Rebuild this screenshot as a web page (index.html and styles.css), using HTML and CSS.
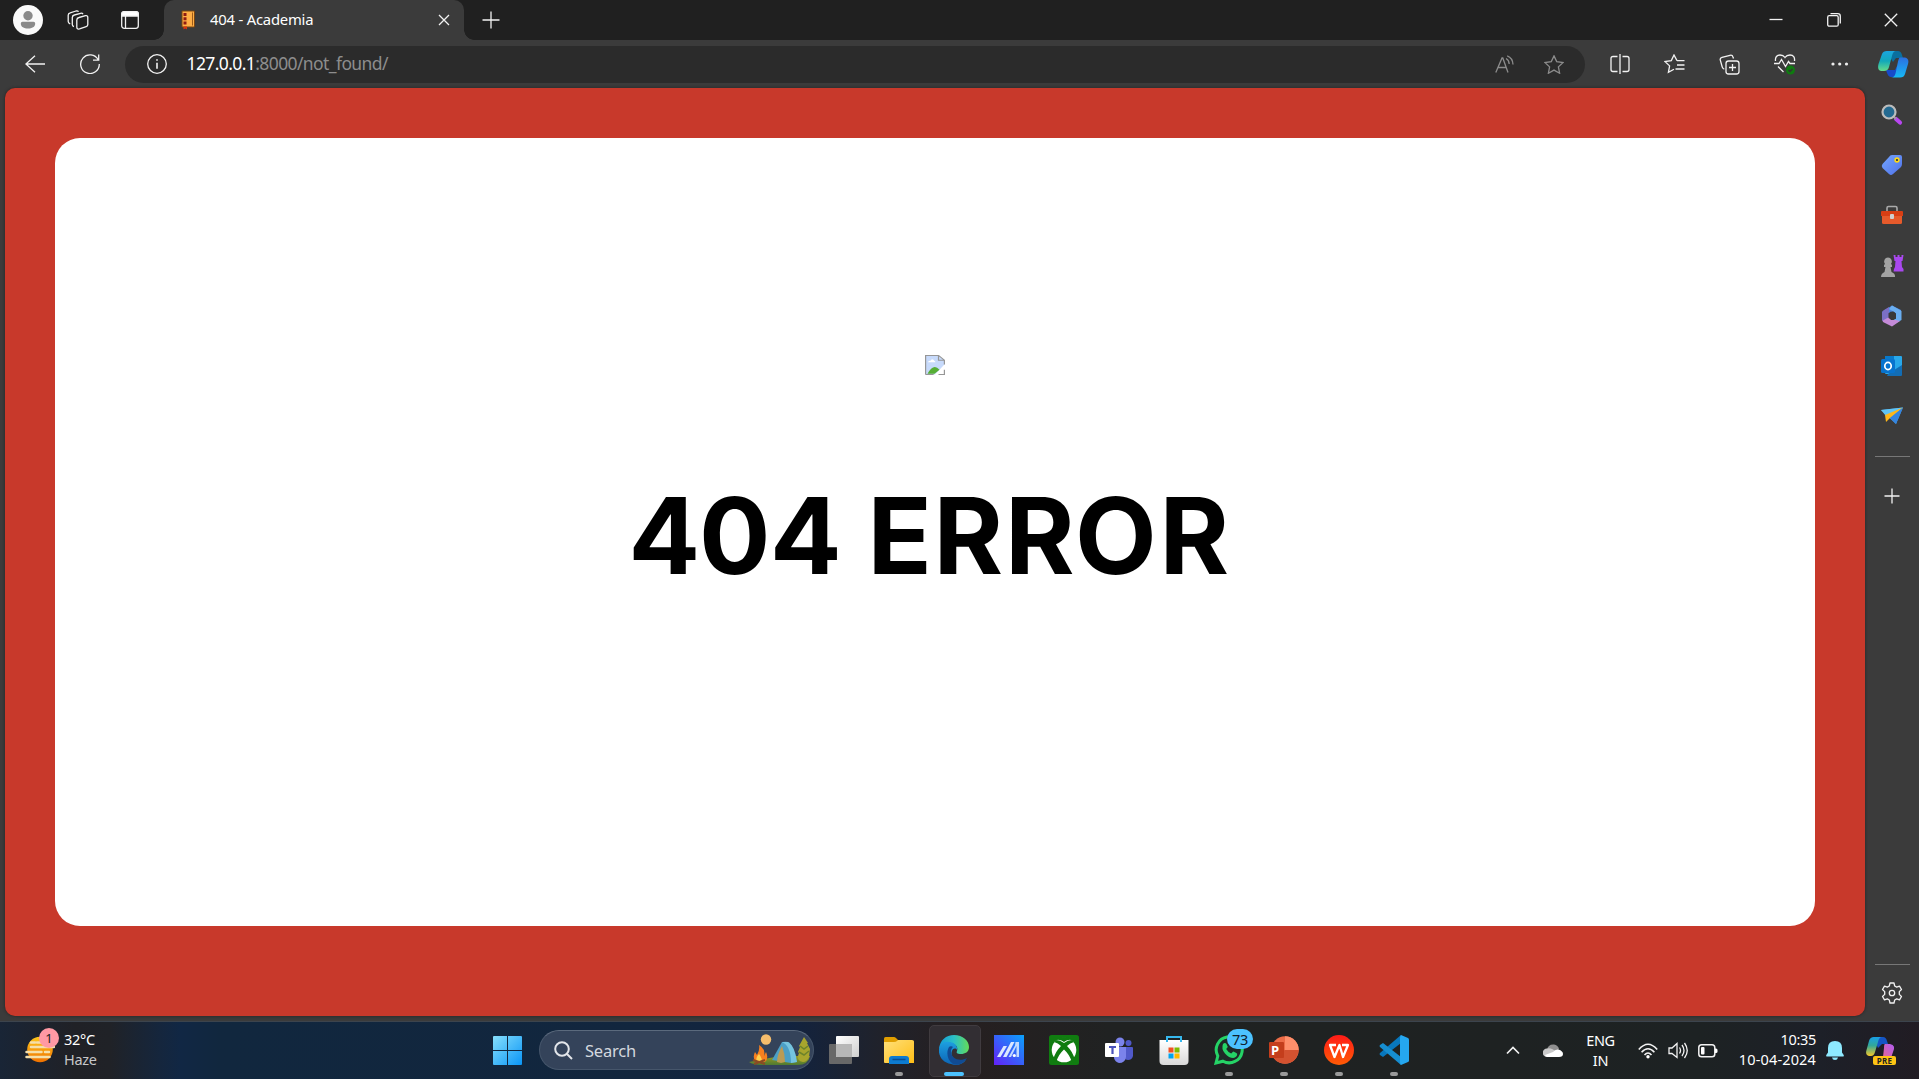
FILE: index.html
```html
<!DOCTYPE html>
<html lang="en">
<head>
<meta charset="utf-8">
<title>404 - Academia</title>
<link rel="stylesheet" href="styles.css">
</head>
<body>
<header class="titlebar">
  <div class="title-tools">
    <svg width="30" height="30" viewBox="0 0 30 30"><circle cx="15" cy="15" r="15" fill="#fafafa"/><circle cx="15" cy="10.700" r="4.700" fill="#8a8a8a"/><path d="M9.500 16.800h11a1.700 1.700 0 0 1 1.700 1.700c0 3.600-3.200 5-7.200 5s-7.200-1.400-7.200-5a1.700 1.700 0 0 1 1.700-1.700z" fill="#8a8a8a"/></svg>
    <svg class="line" width="22" height="22" viewBox="0 0 22 22"><path d="M12 8.500l6.500-1.800q2.300-.5 2.300 1.800v7q0 1.700-1.600 2.200l-6.700 2.200q-2.700.7-2.700-2V11q0-2 2.200-2.500z"/><path d="M7 17.500q-1.700-.3-1.700-2V8.500q0-2 2-2.500l6.200-1.700q1.800-.4 2.500.8M3.200 14.800Q1.200 14 1.200 12.500V6.300q0-2 2-2.500L9 2q1.800-.5 2.500.8"/></svg>
    <svg class="line" width="18" height="18" viewBox="0 0 18 18"><rect x=".7" y=".7" width="16.600" height="16.600" rx="2.500"/><path d="M.7 5V3.200Q.7.700 3.200.700h11.600q2.500 0 2.500 2.500V5z" fill="#fff"/><path d="M4.500 5v12"/></svg>
  </div>
  <div class="tab">
    <svg width="15" height="20" viewBox="0 0 15 20"><path d="M1 1h12.500v16H1z" fill="#ffae45" stroke="#7a4612"/><path d="M11.500 2.500v13" stroke="#9c5b19"/><path d="M2.500 3h3v3h-3zm0 4.200h3v3h-3zm0 4.200h3v3h-3z" fill="#8e1b12"/><path d="M2.500 16.500h3.500v3l-1.700-1-1.800 1z" fill="#d8340f"/></svg>
    <span class="tab-title">404 - Academia</span>
    <svg class="line" width="12" height="12" viewBox="0 0 12 12"><path d="M1 1l10 10M11 1L1 11"/></svg>
  </div>
  <svg class="line new-tab" width="18" height="18" viewBox="0 0 18 18"><path d="M9 .5v17M.5 9h17"/></svg>
  <div class="window-buttons">
    <span><svg class="line" width="14" height="14" viewBox="0 0 14 14"><path d="M.5 6.500h13"/></svg></span>
    <span><svg class="line" width="14" height="14" viewBox="0 0 14 14"><rect x=".7" y="2.700" width="10.500" height="10.500" rx="1.500"/><path d="M3.500.7h7.300q2.500 0 2.500 2.500v7.300"/></svg></span>
    <span><svg class="line" width="14" height="14" viewBox="0 0 14 14"><path d="M.8.8l12.400 12.400M13.200.8L.8 13.200"/></svg></span>
  </div>
</header>

<nav class="toolbar">
  <div class="nav-buttons">
    <svg class="line" width="20" height="18" viewBox="0 0 20 18"><path d="M10 .7L.9 9l9.100 8.300M1 9h19"/></svg>
    <svg class="line" width="20" height="20" viewBox="0 0 20 20"><path d="M18.200 5.800A9.300 9.300 0 1 0 19.300 10M18.700.5v5.700H13"/></svg>
  </div>
  <div class="address">
    <svg class="line" width="20" height="20" viewBox="0 0 20 20"><circle cx="10" cy="10" r="9.300"/><path d="M10 8.800v6M10 5.200v1.600" stroke-width="1.600"/></svg>
    <span class="url"><b>127.0.0.1</b>:8000/not_found/</span>
    <svg class="line dim" width="20" height="18" viewBox="0 0 20 18"><path d="M.8 17.500L7 3h.8L13 17.500M2.900 12.500h8.500M11 3.500q3 1.500 3.200 5.500M12.200.8q5.500 2 5.800 8.700"/></svg>
    <svg class="line dim" width="20" height="19" viewBox="0 0 20 19"><path d="M10 .9l2.700 5.700 6.400.9-4.700 4.400 1.200 6.300-5.600-3.100-5.600 3.100 1.200-6.300L.9 7.500l6.400-.9z"/></svg>
  </div>
  <div class="toolbar-actions">
    <span><svg class="line" width="20" height="20" viewBox="0 0 20 20"><path d="M7.500 2.500H3Q1 2.500 1 4.500v11q0 2 2 2h4.500M12.500 2.500H17q2 0 2 2v11q0 2-2 2h-4.500"/><path d="M10 0v20"/></svg></span>
    <span><svg class="line" width="21" height="20" viewBox="0 0 21 20"><path d="M13 6.600L10 1 7.300 6.600.9 7.500l4.700 4.400-1.200 6.400 5.600-3.100M13 6.600h7.500M13 11h7.500M11.500 15h9"/></svg></span>
    <span><svg class="line" width="21" height="21" viewBox="0 0 21 21"><rect x="7" y="7" width="13" height="13" rx="2.500"/><path d="M13.500 10v7M10 13.500h7M14.500 4.500L14 3q-.7-2.300-3-1.700L3 3.300Q.7 4 1.300 6.200l2 7q.4 1.600 2 2"/></svg></span>
    <span><svg class="line" width="22" height="22" viewBox="0 0 22 22"><path d="M1.500 8C1 4 3 2 6 2c2.500 0 4 1 5 2.500C12 3 14 2 16 2c3.500 0 5 2.500 4.500 6M0 10.500h5l2.500-4 4 7 3-5 1.500 2h5M4 13.500l5.500 5.500"/><circle cx="16.500" cy="17" r="4.500" fill="#0f7b10" stroke="none"/><path d="M14.500 17l1.500 1.500 2.500-2.500" stroke="#333"/></svg></span>
    <span><svg width="18" height="4" viewBox="0 0 18 4" fill="#eee"><circle cx="2" cy="2" r="1.600"/><circle cx="8.700" cy="2" r="1.600"/><circle cx="15.500" cy="2" r="1.600"/></svg></span>
    <span><svg width="31" height="28" viewBox="0 0 31 28"><defs><linearGradient id="ca" x1="0" y1="0" x2="0" y2="1"><stop offset="0" stop-color="#1ba5df"/><stop offset=".5" stop-color="#12a8ba"/><stop offset="1" stop-color="#66dc8a"/></linearGradient><linearGradient id="cb" x1="0" y1="0" x2="0" y2="1"><stop offset="0" stop-color="#2c6fe0"/><stop offset="1" stop-color="#16b9f5"/></linearGradient></defs><path d="M8 1h12q3 0 4 4l1 3h-7l-3 4z" fill="#0a6f9f"/><path d="M8 20h9l2-4 2 11h-8q-2.500 0-4-4z" fill="#174bc9"/><path d="M9 1h9q-3 0-4 5l-3 11q-1 4-5 4H3q-4-1-2.500-7L4 4q1-3 5-3z" fill="url(#ca)"/><path d="M22 7.500h5q4.500 1 3 6.500l-3 10q-1 3.500-5 3.500h-9q3.500 0 4.500-4l2.500-12q1-4 2-4z" fill="url(#cb)"/></svg></span>
  </div>
</nav>

<div class="workspace">
  <main class="page">
    <section class="card">
      <svg width="20" height="20" viewBox="0 0 20 25" preserveAspectRatio="none"><path d="M.6.600h13l5.800 5.800V12L10 24.400H.6z" fill="#c7dafb"/><path d="M2.500 23.500q6-14 12-5l-5 5z" fill="#56ae35"/><path d="M3 9q.5-2 2.500-1.800Q6.500 4 8.500 6q1 2 1.500 1.800.5.600.3 1.200z" fill="#fff"/><path d="M.6 24.500V.600h13l5.800 5.800V12M.6 24.300h8M13.500 24.300h5.900V18.500M13.500.600v5.900h6" fill="none" stroke="#969696" stroke-width="1.200"/></svg>
      <h1><svg width="640" height="160" viewBox="0 0 640 160"><text y="119.300" x="13.500 84 155 225 252.500 318.500 390 460 544.500">404 ERROR</text></svg></h1>
    </section>
  </main>
  <aside class="sidebar">
    <div class="side-apps">
      <span><svg width="22" height="22" viewBox="0 0 22 22"><path d="M15 15l4 3.500" stroke="#b846f0" stroke-width="4.200" stroke-linecap="round"/><path d="M12 12l3 3" stroke="#999" stroke-width="2"/><circle cx="8" cy="8" r="6.500" fill="#246a91" stroke="#bcbcbc" stroke-width="2.200"/></svg></span>
      <span><svg width="22" height="22" viewBox="0 0 22 22"><defs><linearGradient id="tg" x2="1" y2="1"><stop stop-color="#74a7ff"/><stop offset="1" stop-color="#4f70e8"/></linearGradient></defs><path d="M11 1h8q2 0 2 2v7q0 2-1.500 3.500L12 20q-2 2-4 0l-6.500-6q-1.500-2 0-4L8 3q1-2 3-2z" fill="url(#tg)"/><circle cx="16" cy="6" r="1.900" fill="#234" stroke="#fed716" stroke-width="1.600"/></svg></span>
      <span><svg width="24" height="20" viewBox="0 0 24 20"><path d="M7 7V3q0-1.500 1.500-1.500h7Q17 1.500 17 3v4" fill="none" stroke="#aaa" stroke-width="1.600"/><rect x="2" y="7" width="20" height="12" rx="1.500" fill="#e65a2b"/><path d="M2 6h20q1 0 1 1v4H1V7q0-1 1-1z" fill="#d83e14"/><rect x="10" y="9" width="4" height="5" rx="1" fill="#d0d0d0"/></svg></span>
      <span><svg width="24" height="24" viewBox="0 0 24 24"><path d="M13.500 1h2v2h2V1h2v2h2V1h2l-1 6h-1l.5 6 1.500 2v2.500h-10l.5-2.500 1-2 .500-6h-1z" fill="#a948ef"/><path d="M8 3.500a4 4 0 0 1 3 6.500l1 1v2h-1.500l1 5q4 1.500 3.500 5H1q0-3.500 3.500-5l1-5H4v-2l1-1a4 4 0 0 1 3-6.500z" fill="#a3a3a3"/></svg></span>
      <span><svg width="22" height="22" viewBox="0 0 22 22"><path d="M11 .5L20 5v6l-6-3V5L8 8.500V13L1 15V7z" fill="#4c86df"/><path d="M20.500 6v9L11 20.500l-3-3 7-4V8L8 4l3-3.500z" fill="#6aaef0"/><path d="M1 14l7-2 2 3h5l4 1-8 5.500L2 17z" fill="#c58bd8"/><path d="M1 8q0-2 2-3l5-3v10l-7 4z" fill="#7b6fc4"/><path d="M10 6.500l5 2.300v4.600L11 15l-3.500-2V8.300z" fill="#393939"/></svg></span>
      <span><svg width="22" height="22" viewBox="0 0 22 22"><rect x="4" y="1" width="17" height="18" rx="1" fill="#28a8ea"/><path d="M4 1h9v9H4z" fill="#0879c9"/><path d="M7 19l14-9v10q0 1-1 1H6z" fill="#126db5"/><rect y="4" width="14" height="14" rx="1.500" fill="#0873ce"/><ellipse cx="7" cy="11" rx="3.200" ry="3.600" fill="none" stroke="#fff" stroke-width="1.700"/></svg></span>
      <span><svg width="22" height="18" viewBox="0 0 22 18"><path d="M0 3l22-2.500L15 17z" fill="#40a4ed"/><path d="M22 .5L5 9 0 3z" fill="#60c4f4"/><path d="M22 .5L4 8l1 7 4-4z" fill="#ffb719"/><path d="M22 .5L9 11l6 6z" fill="#3584df"/></svg></span>
    </div>
    <hr>
    <svg class="line side-add" width="16" height="16" viewBox="0 0 16 16"><path d="M8 .5v15M.5 8h15"/></svg>
    <div class="side-bottom">
      <hr>
      <svg class="line" width="22" height="22" viewBox="0 0 22 22"><path d="M9 1h4l.7 3 2 1.100 2.800-1 2 3.400-2.200 2.100v2.800l2.200 2.100-2 3.400-2.800-1-2 1.100L13 21H9l-.7-3-2-1.100-2.800 1-2-3.400 2.200-2.100V9.600L1.500 7.500l2-3.400 2.800 1 2-1.100z" stroke-linejoin="round"/><circle cx="11" cy="11" r="2.700"/></svg>
    </div>
  </aside>
</div>

<footer class="taskbar">
  <div class="weather">
    <div class="weather-icon">
      <svg width="30" height="27" viewBox="0 0 30 27"><defs><linearGradient id="sun" x1="0" y1="0" x2="0" y2="1"><stop stop-color="#ffc81c"/><stop offset="1" stop-color="#ef7100"/></linearGradient></defs><circle cx="15" cy="13.500" r="12.800" fill="url(#sun)"/><path d="M6 6.500h4M12 6.500h5M6 11h23M1.500 16h15M20 16h4M1.500 21h23" stroke="#f5dfaa" stroke-width="2.500" stroke-linecap="round"/></svg>
      <span class="badge">1</span>
    </div>
    <div class="weather-text"><span>32°C</span><span class="muted">Haze</span></div>
  </div>
  <div class="apps">
    <span class="app"><svg width="29" height="29" viewBox="0 0 29 29"><defs><linearGradient id="win" x2="1" y2="1"><stop stop-color="#86dffc"/><stop offset="1" stop-color="#0a95f6"/></linearGradient></defs><path d="M0 1q0-1 1-1h13v14H0zM15 0h13q1 0 1 1v13H15zM0 15h14v14H1q-1 0-1-1zM15 15h14v13q0 1-1 1H15z" fill="url(#win)"/></svg></span>
    <div class="search">
      <svg width="19" height="19" viewBox="0 0 19 19" fill="none" stroke="#e3e6ea" stroke-width="2"><circle cx="8" cy="8" r="6.800"/><path d="M13 13l5 5"/></svg>
      <span>Search</span>
      <svg class="camp" width="62" height="34" viewBox="0 0 62 34"><defs><linearGradient id="grass" x1="0" y1="0" x2="0" y2="1"><stop stop-color="#9a9c22"/><stop offset="1" stop-color="#4e7a32"/></linearGradient></defs><path d="M0 28q18-4 34-6h27q-2 9-12 9H12Q4 31 0 28z" fill="url(#grass)"/><path d="M55 3l4 6h-1l3 6-1 8q-2 5-6 5-6-1-5-6l1-3-1-1 2-5-1-1z" fill="#a8a52d"/><path d="M51 12l4 3 4-3M50 18l5 3 5-4" stroke="#6d832b" stroke-width="1.500" fill="none"/><circle cx="17" cy="5.500" r="5.200" fill="#f5bd6c"/><path d="M10 11q7 4 5 11l2-4q3 6-1 10H7q-4-4-1-10l2 3q3-5 2-10z" fill="#f7801f"/><path d="M10 20q4 5 2 8H8q-2-4 2-8z" fill="#ffd14d"/><path d="M4 26l12 4M16 26L5 30" stroke="#8a4a24" stroke-width="2.200"/><path d="M23 26L33 8q6-1 8 1l7 19-6 1z" fill="#4b9fc6"/><path d="M33 8q9 4 9 21l6-1Q46 12 39 8z" fill="#75c4df"/><path d="M33 12q-5 9-5 16l4 1 4-1q0-8-3-16z" fill="#bb9b55"/></svg>
    </div>
    <div class="pinned">
      <span class="app"><svg width="30" height="28" viewBox="0 0 30 28"><defs><linearGradient id="tv" x1="0" y1="0" x2="1" y2="1"><stop stop-color="#fff"/><stop offset="1" stop-color="#cfcfcf"/></linearGradient></defs><rect y="8" width="23" height="20" rx="1" fill="#686868"/><rect x="7" width="23" height="21" rx="1" fill="url(#tv)"/><path d="M7 8h16v13H8q-1 0-1-1z" fill="#b7b7b7"/></svg></span>
      <span class="app running"><svg width="30" height="27" viewBox="0 0 30 27"><defs><linearGradient id="fo" x2="1" y2="1"><stop stop-color="#ffe07a"/><stop offset="1" stop-color="#ffbe16"/></linearGradient></defs><path d="M0 1.500Q0 0 1.500 0H10q1 0 2 1l2 2v6H0z" fill="#e09e00"/><path d="M0 5h10q2 0 3-1l1-1h14q2 0 2 1.500V26H1q-1 0-1-1z" fill="url(#fo)"/><path d="M5 27v-5q0-3 3-3h14q3 0 3 3v5z" fill="#0d7bd0"/><path d="M8.500 22.500h13" stroke="#0a4d91" stroke-width="1.500"/></svg></span>
      <span class="app active"><svg width="30" height="30" viewBox="0 0 30 30"><defs><linearGradient id="ed" x1="0" x2="1"><stop stop-color="#159cda"/><stop offset=".5" stop-color="#2bbfc6"/><stop offset="1" stop-color="#64dc58"/></linearGradient><linearGradient id="ee" x1="0" y1="0" x2="0" y2="1"><stop stop-color="#1d9fe0"/><stop offset="1" stop-color="#0c64b5"/></linearGradient></defs><path d="M0 14C1 5 7 0 15 0c9 0 15 6 15 12 0 5-4 7-8 7s-5-1-4-3c2-5-4-9-9-8-4 1-7 3-9 6z" fill="url(#ed)"/><path d="M0 14c1-5 5-8 10-7 5 0 9 4 8 8-1-2-4-2-5 1-2 5 3 13 12 10l2-1c-4 5-10 6-15 4C4 28-1 21 0 14z" fill="url(#ee)"/><path d="M10 12c-3 5-2 13 4 17 6 2 11-1 14-6-7 4-16 1-16-7 0-2 1-3 2-4-1-1-3-1-4 0z" fill="#114b93"/></svg></span>
      <span class="app"><svg width="30" height="30" viewBox="0 0 30 30"><defs><linearGradient id="ma" x1="0" y1="1" x2="1" y2="0"><stop stop-color="#6420f8"/><stop offset="1" stop-color="#0aa2fb"/></linearGradient></defs><path d="M0 0h30v30H0z" fill="url(#ma)"/><path d="M3 22L9.500 11H13L6.500 22z" fill="#dce8ff"/><path d="M9 22L17 7h3.500l-8 15z" fill="#dce8ff"/><path d="M14.500 22L21 10.500 21.500 7H25v15h-2.500V11L17 22z" fill="#c1daff"/><circle cx="20.300" cy="20.500" r="1.600" fill="#fff"/></svg></span>
      <span class="app"><svg width="30" height="30" viewBox="0 0 30 30"><rect width="30" height="30" rx="2.500" fill="#107c10"/><circle cx="15" cy="15" r="12.300" fill="#fff"/><path d="M7 5q4-1 8 2 4-3 8-2-3-3-8-3T7 5zM15 8q-4-3-7.500-3L5 7q4 1 7 4-6 6-7.500 13l3 2Q10 19 15 14.500 20 19 22.500 26l3-2Q24 17 18 11q3-3 7-4l-2.500-2Q19 5 15 8z" fill="#107c10"/></svg></span>
      <span class="app"><svg width="28" height="26" viewBox="0 0 28 26"><circle cx="15" cy="5" r="4.500" fill="#7b83eb"/><circle cx="23.500" cy="6" r="3" fill="#5059c9"/><path d="M19 10h8q1 0 1 1v8q-1 4-5 4-3 0-4-2z" fill="#5059c9"/><path d="M10 10h11v10q-1 6-7 6-4-1-5-5z" fill="#7b83eb"/><rect y="6" width="14" height="14" rx="1" fill="#fff"/><path d="M4 10h7M7.500 10v7" stroke="#4b53bc" stroke-width="2.200"/></svg></span>
      <span class="app"><svg width="30" height="30" viewBox="0 0 30 30"><defs><linearGradient id="st" x1="0" y1="0" x2="0" y2="1"><stop stop-color="#fff"/><stop offset="1" stop-color="#d9d9d9"/></linearGradient></defs><path d="M.5 5h29v21q0 4-4 4h-21q-4 0-4-4z" fill="url(#st)"/><path d="M8 7V2h14v5" fill="none" stroke="#36b8ee" stroke-width="2"/><path d="M9.500 12.500h5v5h-5z" fill="#f25022"/><path d="M15.500 12.500h5v5h-5z" fill="#7fba00"/><path d="M9.500 18.500h5v5h-5z" fill="#00a4ef"/><path d="M15.500 18.500h5v5h-5z" fill="#ffb900"/></svg></span>
      <span class="app running"><svg width="30" height="30" viewBox="0 0 30 30"><path d="M2 28l1.800-7A13 13 0 1 1 9 26.200z" fill="#1f2927" stroke="#25d366" stroke-width="3"/><path d="M9 9q2-2 3.500 0l1.300 3-1.600 2q1.600 3 5 4.500l2-2q4 1.500 4 2.500 0 3-4 4Q15 23 11 18.500 7 14 9 9z" fill="#25d366"/></svg><span class="badge count">73</span></span>
      <span class="app running"><svg width="30" height="30" viewBox="0 0 30 30"><circle cx="16" cy="15" r="13.700" fill="#ed6c47"/><path d="M16 1.300A13.700 13.700 0 0 1 29.700 15H16z" fill="#ff8f6b"/><path d="M3 19q2 9 13 9.700Q28 28 29.700 15H16z" fill="#d35230"/><rect y="7" width="15" height="16" rx="1" fill="#c43e1c"/></svg><span class="glyph">P</span></span>
      <span class="app running"><svg width="30" height="30" viewBox="0 0 30 30"><defs><linearGradient id="wp" x1="0" y1="0" x2="0" y2="1"><stop stop-color="#ff1b18"/><stop offset="1" stop-color="#ff5b05"/></linearGradient></defs><circle cx="15" cy="15" r="15" fill="url(#wp)"/><path d="M12 10H6l4.500 12L15.500 10 19 22l5-12h-6" fill="none" stroke="#fff" stroke-width="2.300" stroke-linejoin="round"/></svg></span>
      <span class="app running"><svg width="30" height="30" viewBox="0 0 30 30"><path d="M22 0v8L4 22l-3-2q-1-1 0-2z" fill="#0877bd"/><path d="M22 30v-8L4 8l-3 2q-1 1 0 2z" fill="#168ed1"/><path d="M22 0l7 3q1 .500 1 1.500v21q0 1-1 1.500l-7 3q-1-1-1-3V3q0-2 1-3z" fill="#25a7f0"/></svg></span>
    </div>
  </div>
  <div class="tray">
    <svg class="line chevron" width="14" height="9" viewBox="0 0 14 9"><path d="M1 7.500l6-6 6 6" stroke-width="1.700"/></svg>
    <svg class="cloud" width="20" height="14" viewBox="0 0 20 14"><path d="M4 6q1-6 7-5.500Q15 1 16 5L8 12z" fill="#8f8f8f"/><path d="M4 13a4.200 4.200 0 0 1 0-8.500q5-1 9 3.500v5z" fill="#c9c9c9"/><path d="M4 13q-2-1-2-2l8-3q2-3 5.500-2.500Q20 7 20 10t-4 3z" fill="#fff"/></svg>
    <div class="lang"><span>ENG</span><span>IN</span></div>
    <div class="status">
      <svg class="line" width="20" height="16" viewBox="0 0 20 16"><path d="M.8 6.500Q10-4 19.200 6.500M3.600 9.200q6.400-7 12.800 0M6.500 12q3.500-4 7 0" stroke-width="1.600"/><circle cx="10" cy="13.800" r="1.700" fill="#fff" stroke="none"/></svg>
      <svg class="line" width="20" height="17" viewBox="0 0 20 17"><path d="M1 6h3l5-4.500v14L4 11.500H1zM11.500 5.500q2 3 0 6M14 3q4 5.500 0 11M16.500 1q5.500 7.500 0 15" stroke-width="1.300"/></svg>
      <svg class="line" width="20" height="14" viewBox="0 0 20 14"><rect x=".8" y=".8" width="16" height="12" rx="2.800" stroke-width="1.500"/><rect x="3" y="3" width="3.500" height="7.500" rx="1" fill="#fff" stroke="none"/><path d="M17 4.500h1q1.500 0 1.500 1.500v1.500q0 1.500-1.500 1.500h-1z" fill="#fff" stroke="none"/></svg>
    </div>
    <div class="clock"><span>10:35</span><span class="date">10-04-2024</span></div>
    <svg class="bell" width="18" height="19" viewBox="0 0 18 19"><path d="M9 0q7 0 7 7v4.500l1.700 2.500q.5 1.500-1 1.500H1.300q-1.500 0-1-1.500L2 11.500V7q0-7 7-7zM6 16.500h6Q11.500 19 9 19t-3-2.500z" fill="#8eeaff"/></svg>
    <div class="copilot">
      <svg width="28" height="27" viewBox="0 0 28 27"><defs><linearGradient id="pa" x1="0" y1="0" x2="0" y2="1"><stop stop-color="#189fe8"/><stop offset=".45" stop-color="#32a899"/><stop offset="1" stop-color="#f7c928"/></linearGradient><linearGradient id="pb" x1="1" y1="0" x2="0" y2="1"><stop stop-color="#b05cf2"/><stop offset="1" stop-color="#f36a7c"/></linearGradient></defs><path d="M7 0h10q3 0 4 4l1 3h-6l-4 4z" fill="#1554c4"/><path d="M8 0h8q-3 0-4 5L9 15q-1 4-4 4H3q-4-1-2.500-6L3 4q1-4 5-4z" fill="url(#pa)"/><path d="M19 7h5q5 1 4 5l-3 9q-1 3-4 3h-8q3 0 4-4l1-9q0-4 1-4z" fill="url(#pb)"/></svg>
      <span class="pre">PRE</span>
    </div>
  </div>
</footer>
</body>
</html>
```
FILE: styles.css
```css
* { box-sizing: border-box; }

body {
  margin: 0;
  height: 1079px;
  display: flex;
  flex-direction: column;
  overflow: hidden;
  background: #3b3b3b;
  color: #fff;
  font-family: "Noto Sans", "Open Sans", sans-serif;
}

svg { display: block; flex: none; }

.line { fill: none; stroke: #f2f2f2; stroke-width: 1.3; }
.dim { stroke: #8c8c8c; }

/* Title bar */
.titlebar { display: flex; align-items: center; height: 40px; background: #202020; }
.title-tools { display: flex; align-items: center; width: 164px; gap: 24px; padding-left: 13px; }
.title-tools svg:last-child { margin-left: 8px; }

.tab {
  position: relative;
  display: flex;
  align-items: center;
  width: 300px;
  height: 40px;
  padding: 0 14px 0 17px;
  border-radius: 10px 10px 0 0;
  background: #3b3b3b;
}
.tab::before,
.tab::after {
  content: "";
  position: absolute;
  bottom: 0;
  width: 10px;
  height: 10px;
}
.tab::before { left: -10px; background: radial-gradient(circle at 0 0, #202020 9.5px, #3b3b3b 10px); }
.tab::after { right: -10px; background: radial-gradient(circle at 100% 0, #202020 9.5px, #3b3b3b 10px); }
.tab-title { flex: 1; margin-left: 14px; padding-bottom: 2px; font-size: 14.8px; letter-spacing: -.2px; }
.new-tab { margin-left: 17.5px; }
.window-buttons { display: flex; margin-left: auto; margin-right: -1px; }
.window-buttons span { display: flex; justify-content: center; width: 57.5px; }

/* Toolbar */
.toolbar { display: flex; align-items: center; height: 48px; }
.nav-buttons { display: flex; align-items: center; width: 125px; gap: 35px; padding-left: 25px; }
.address {
  display: flex;
  align-items: center;
  width: 1460px;
  height: 37px;
  padding: 0 21px 0 22px;
  border-radius: 19px;
  background: #2b2b2b;
}
.url { flex: 1; margin-left: 19.5px; padding-bottom: 2px; color: #8d8d8d; font-size: 17.5px; letter-spacing: -.6px; }
.url b { color: #fff; font-weight: 400; }
.address .dim + .dim { margin-left: 29px; }
.toolbar-actions { display: flex; margin-left: 7px; }
.toolbar-actions span { display: flex; align-items: center; justify-content: center; width: 55px; height: 30px; }
.toolbar-actions span:last-child { width: 52px; }

/* Page and sidebar */
.workspace { display: flex; height: 933px; padding: 0 0 5px 5px; }
.page { width: 1860px; height: 928px; padding: 50px; border-radius: 10px; background: #c8392b; box-shadow: 0 0 3px #222; }
.card {
  display: flex;
  flex-direction: column;
  align-items: center;
  height: 788px;
  padding-top: 217px;
  border-radius: 25px;
  background: #fff;
}
.card h1 { margin: 80px 0 0; font: 680 106px/1 Inter, "Noto Sans", sans-serif; }

.sidebar { display: flex; flex-direction: column; align-items: center; width: 54px; }
.side-apps { display: flex; flex-direction: column; padding-top: 2px; }
.side-apps span { display: flex; align-items: center; justify-content: center; height: 50.2px; }
.sidebar hr { width: 35px; height: 1px; margin: 15px 0 0; border: 0; background: #777; }
.side-add { margin-top: 31px; }
.side-bottom { margin-top: auto; padding-bottom: 12px; display: flex; flex-direction: column; align-items: center; gap: 17px; }

/* Taskbar */
.taskbar {
  display: flex;
  height: 58px;
  border-top: 1px solid #3c444d;
  background: linear-gradient(90deg, #192536 0, #202126 75px, #202227 110px, #15263d 160px, #112744 180px, #11273e 220px, #12263e 650px, #12233f 790px, #20222b 880px, #261f20 960px, #202222 1110px, #1e2222 1500px, #1d2223 1700px, #1d2028 1820px, #211c23 1919px);
}
.weather { display: flex; width: 480px; padding: 9px 0 0 25px; gap: 9px; }
.weather-icon { position: relative; height: 32px; padding-top: 5px; }
.weather-text { display: flex; flex-direction: column; font-size: 14.5px; line-height: 20px; letter-spacing: -.3px; margin-top: -2px; }
.muted { color: #c7c7c9; }
.badge {
  position: absolute;
  top: -3px;
  left: 14px;
  width: 20px;
  height: 20px;
  border-radius: 10px;
  background: #ff99a4;
  color: #222;
  font-size: 13px;
  line-height: 20px;
  text-align: center;
}
.count { top: 7px; left: 26px; width: 26px; background: #4cc2ff; font-size: 14.5px; letter-spacing: -.4px; color: #10202c; }

.apps { display: flex; }
.app { position: relative; display: flex; align-items: center; justify-content: center; width: 55px; height: 56px; }
.search {
  display: flex;
  align-items: center;
  width: 275px;
  height: 40px;
  margin: 8px 2px 0 4px;
  padding: 0 2px 0 14px;
  border: 1px solid #46566b;
  border-top-color: #5b6a7d;
  border-radius: 20px;
  background: #34435a;
  color: #d3d8df;
  font-size: 16.5px;
  letter-spacing: -.2px;
}
.search span { flex: 1; margin-left: 12px; }
.camp { margin-top: 2px; }
.pinned { display: flex; }
.running::after,
.active::after {
  content: "";
  position: absolute;
  bottom: 2px;
  left: 24px;
  width: 8px;
  height: 4px;
  border-radius: 2px;
  background: #9a9a9a;
}
.active::before {
  content: "";
  position: absolute;
  top: 3px;
  left: 3px;
  width: 50px;
  height: 50px;
  border: 1px solid #403b3f;
  border-radius: 5px;
  background: #322e33;
}
.active svg { position: relative; }
.active::after { left: 18px; width: 20px; background: #4cc2ff; }
.glyph { position: absolute; top: 19px; left: 15px; font: 700 13px/18px "Open Sans", sans-serif; }

.tray { display: flex; flex: 1; align-items: center; justify-content: flex-end; padding-right: 25px; font-size: 14.5px; line-height: 20px; letter-spacing: -.3px; }
.cloud { margin-left: 23px; }
.lang { display: flex; flex-direction: column; align-items: center; width: 75px; padding-bottom: 2px; }
.status { display: flex; align-items: center; gap: 10px; }
.clock { display: flex; flex-direction: column; align-items: flex-end; width: 98px; padding-bottom: 4px; }
.date { letter-spacing: .15px; }
.bell { margin-left: 10px; }
.copilot { position: relative; margin-left: 22px; }
.pre {
  position: absolute;
  left: 7px;
  top: 19px;
  width: 23px;
  height: 9px;
  border-radius: 2px;
  background: #ffc414;
  color: #222;
  font-size: 8px;
  font-weight: 700;
  line-height: 9px;
  text-align: center;
  letter-spacing: .2px;
}
```
